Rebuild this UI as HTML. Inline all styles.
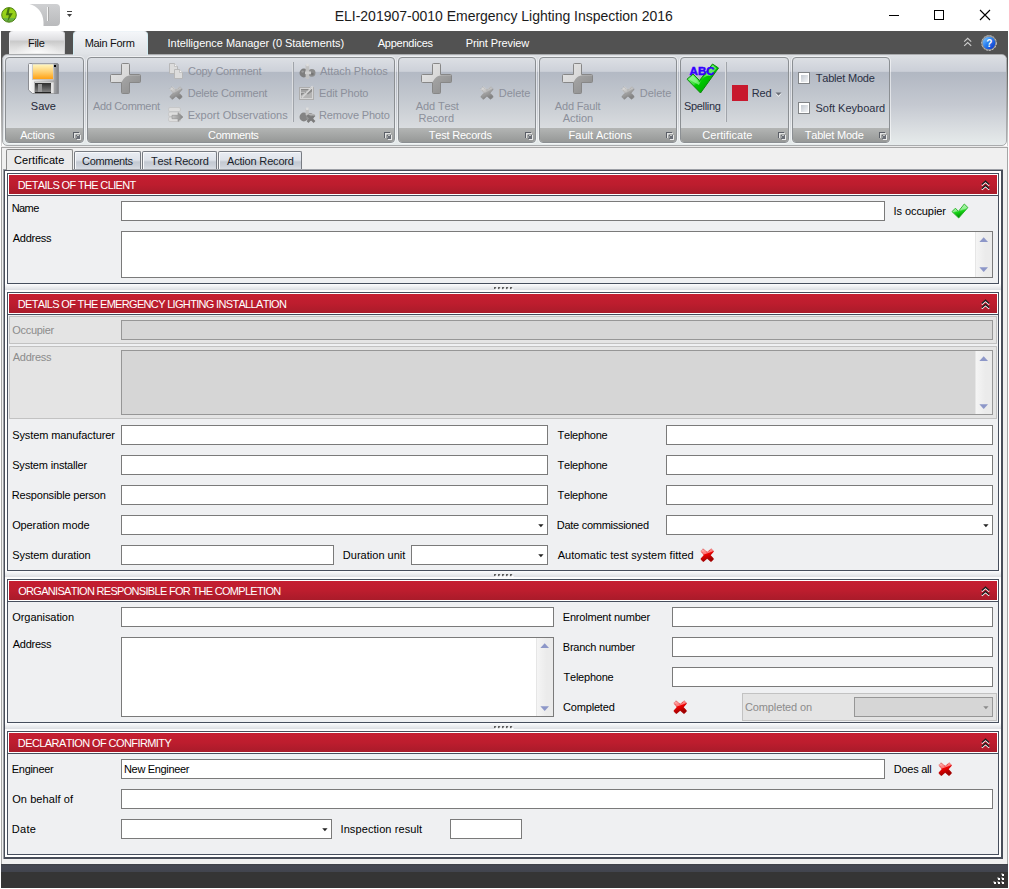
<!DOCTYPE html>
<html><head><meta charset="utf-8"><title>ELI</title>
<style>
*{box-sizing:border-box;margin:0;padding:0}
html,body{width:1009px;height:889px;overflow:hidden;background:#fff;font-family:"Liberation Sans",sans-serif;font-size:11px;color:#000}
body{position:relative}
.t{position:absolute;white-space:nowrap;font-kerning:none}
svg{position:absolute;overflow:visible}
.inp{position:absolute;background:#fff;border:1px solid #7a7a7a}
.dinp{position:absolute;background:#d6d6d6;border:1px solid #969696}
.grp{position:absolute;top:57px;height:86px;border:1px solid #8b8f93;border-radius:4px;background:linear-gradient(#dcdfe4 0,#cdd1d9 13.4px,#b3b9c4 14px,#c3c8cf 40px,#d9dcdf 70px);box-shadow:0 0 0 1px rgba(255,255,255,.55)}
.grp i{position:absolute;left:0;right:0;bottom:0;height:14px;background:linear-gradient(#b3b5b4,#969897);border-radius:0 0 3px 3px}
.hdr{position:absolute;height:19px;background:linear-gradient(#c51e31,#bd1d2e 50%,#a91b2a)}

</style></head><body>
<div style="position:absolute;left:0px;top:0px;width:1009px;height:889px;background:#fff"></div>
<div class="t " style="left:334.7px;top:7.65px;font-size:14px;line-height:17px;letter-spacing:-0.008px;color:#1b1b1b;">ELI-201907-0010 Emergency Lighting Inspection 2016</div>
<svg style="left:880px;top:0" width="129" height="31" viewBox="0 0 129 31"><g stroke="#000" stroke-width="1" fill="none" shape-rendering="crispEdges"><path d="M9 15.5H19"/><rect x="54.5" y="10.5" width="9" height="9"/></g><path d="M100 10L110 20M110 10L100 20" stroke="#000" stroke-width="1.1" fill="none"/></svg>
<svg style="left:1px;top:7px" width="16" height="16" viewBox="0 0 16 16"><defs><linearGradient id="ag" x1="0" y1="0" x2="0" y2="1"><stop offset="0" stop-color="#8cc814"/><stop offset=".3" stop-color="#9ad418"/><stop offset=".68" stop-color="#92cc18"/><stop offset=".7" stop-color="#6eb844"/><stop offset="1" stop-color="#5ea83a"/></linearGradient></defs><circle cx="8" cy="7.9" r="7.3" fill="url(#ag)" stroke="#4f8214" stroke-width="1"/><path d="M6.6 1.5L8.8 .8L7.8 6.2H11.8L6.3 15L7.9 8.2H4.9Z" fill="#44740e"/></svg>
<svg style="left:29px;top:4px" width="32" height="23" viewBox="0 0 32 23"><defs><linearGradient id="qg" x1="0" y1="0" x2="0" y2="1"><stop offset="0" stop-color="#cfd0d2"/><stop offset="1" stop-color="#b9babc"/></linearGradient></defs><path d="M0.5 0H27Q31 0 31 4V18Q31 22 27 22H14.5V18C14 8 8 2 0.5 0Z" fill="url(#qg)"/><path d="M18.5 3V17" stroke="#f4f4f4" stroke-width="1"/><path d="M19.5 3V17" stroke="#aaa" stroke-width="1"/></svg>
<svg style="left:66px;top:10px" width="8" height="8" viewBox="0 0 8 8"><path d="M1 1.5H6" stroke="#444" stroke-width="1"/><path d="M1 4H6L3.5 7Z" fill="#444"/></svg>
<div style="position:absolute;left:1px;top:31px;width:1007px;height:27px;background:#525252"></div>
<div style="position:absolute;left:1px;top:58px;width:1px;height:89px;background:linear-gradient(#525252,#d4d4d4)"></div>
<div style="position:absolute;left:1007px;top:58px;width:1px;height:89px;background:linear-gradient(#525252,#d4d4d4)"></div>
<div style="position:absolute;left:9px;top:31px;width:56px;height:23px;border-radius:4px 4px 0 0;background:linear-gradient(#f6f6f8 0,#dedee1 9px,#c9c9c9 10px,#dcdcdc 16px,#ededed 23px);box-shadow:inset 1px 0 0 #e8e8ea, inset -1px 0 0 #d0d0d2"></div>
<div style="position:absolute;left:14px;top:41px;width:46px;height:12px;background:radial-gradient(ellipse at 50% 100%,rgba(255,255,255,.85),rgba(255,255,255,0) 70%)"></div>
<div class="t " style="left:28.0px;top:36.19px;font-size:11px;line-height:14px;letter-spacing:-0.311px;color:#111;">File</div>
<div class="t " style="left:167.5px;top:36.19px;font-size:11px;line-height:14px;letter-spacing:-0.021px;color:#fff;">Intelligence Manager (0 Statements)</div>
<div class="t " style="left:377.7px;top:36.19px;font-size:11px;line-height:14px;letter-spacing:-0.230px;color:#fff;">Appendices</div>
<div class="t " style="left:465.7px;top:36.19px;font-size:11px;line-height:14px;letter-spacing:-0.102px;color:#fff;">Print Preview</div>
<svg style="left:963px;top:37px" width="10" height="11" viewBox="0 0 10 11"><path d="M1.2 4.6L4.7 1.3L8.2 4.6M1.2 8.9L4.7 5.6L8.2 8.9" stroke="#cdcdcd" stroke-width="1.15" fill="none"/></svg>
<svg style="left:981px;top:35px" width="16" height="16" viewBox="0 0 16 16"><defs><linearGradient id="hg" x1="0" y1="0" x2="1" y2="1"><stop offset="0" stop-color="#8fd0ff"/><stop offset=".45" stop-color="#2a80f0"/><stop offset="1" stop-color="#0a2cc0"/></linearGradient></defs><circle cx="8" cy="8" r="7.4" fill="#8c8c8c" stroke="#c4c4c4" stroke-width="1" stroke-dasharray="2.2 1"/><circle cx="8" cy="8" r="6.3" fill="url(#hg)"/><text x="8.2" y="11.6" font-family="Liberation Sans" font-weight="bold" font-size="10" fill="#fff" text-anchor="middle">?</text></svg>
<div style="position:absolute;left:2px;top:54px;width:1005px;height:92px;border:1px solid #a9abad;border-radius:5px;background:linear-gradient(#dcdfe3 0,#cbcfd8 16.4px,#b1b7c2 17px,#c5c9d1 50px,#dfe3e5 80px,#e7eded 92px)"></div>
<div style="position:absolute;left:73px;top:31px;width:75px;height:24px;border-radius:4px 4px 0 0;background:linear-gradient(#f4f6f9,#e6e9ed 60%,#dfe2e6);border:1px solid #d4eef4;border-top-color:#eef4f8;border-bottom:none"></div>
<div style="position:absolute;left:74px;top:54px;width:73px;height:1px;background:#dee1e5"></div>
<div class="t " style="left:84.7px;top:36.19px;font-size:11px;line-height:14px;letter-spacing:-0.304px;color:#111;">Main Form</div>
<div class="grp" style="left:5px;width:79px"><i></i></div>
<div class="grp" style="left:87px;width:308px"><i></i></div>
<div class="grp" style="left:398px;width:138px"><i></i></div>
<div class="grp" style="left:539px;width:138px"><i></i></div>
<div class="grp" style="left:680px;width:109px"><i></i></div>
<div class="grp" style="left:792px;width:98px"><i></i></div>
<svg style="left:73px;top:132px" width="8" height="8" viewBox="0 0 8 8" shape-rendering="crispEdges"><path d="M0 0H6V1H1V6H0Z" fill="#5a5e66"/><path d="M1 1H7V2H2V6H1Z" fill="#e2e3e3"/><path d="M7 3H8V8H4V7H7Z" fill="#e8e9e9"/><rect x="3" y="3" width="4" height="4" fill="#6a6e76"/><rect x="4" y="3" width="2" height="1" fill="#c4c6c6"/><rect x="3" y="4" width="1" height="2" fill="#9a9da0"/><rect x="2" y="2" width="1" height="1" fill="#c8caca"/></svg>
<svg style="left:384px;top:132px" width="8" height="8" viewBox="0 0 8 8" shape-rendering="crispEdges"><path d="M0 0H6V1H1V6H0Z" fill="#5a5e66"/><path d="M1 1H7V2H2V6H1Z" fill="#e2e3e3"/><path d="M7 3H8V8H4V7H7Z" fill="#e8e9e9"/><rect x="3" y="3" width="4" height="4" fill="#6a6e76"/><rect x="4" y="3" width="2" height="1" fill="#c4c6c6"/><rect x="3" y="4" width="1" height="2" fill="#9a9da0"/><rect x="2" y="2" width="1" height="1" fill="#c8caca"/></svg>
<svg style="left:525px;top:132px" width="8" height="8" viewBox="0 0 8 8" shape-rendering="crispEdges"><path d="M0 0H6V1H1V6H0Z" fill="#5a5e66"/><path d="M1 1H7V2H2V6H1Z" fill="#e2e3e3"/><path d="M7 3H8V8H4V7H7Z" fill="#e8e9e9"/><rect x="3" y="3" width="4" height="4" fill="#6a6e76"/><rect x="4" y="3" width="2" height="1" fill="#c4c6c6"/><rect x="3" y="4" width="1" height="2" fill="#9a9da0"/><rect x="2" y="2" width="1" height="1" fill="#c8caca"/></svg>
<svg style="left:666px;top:132px" width="8" height="8" viewBox="0 0 8 8" shape-rendering="crispEdges"><path d="M0 0H6V1H1V6H0Z" fill="#5a5e66"/><path d="M1 1H7V2H2V6H1Z" fill="#e2e3e3"/><path d="M7 3H8V8H4V7H7Z" fill="#e8e9e9"/><rect x="3" y="3" width="4" height="4" fill="#6a6e76"/><rect x="4" y="3" width="2" height="1" fill="#c4c6c6"/><rect x="3" y="4" width="1" height="2" fill="#9a9da0"/><rect x="2" y="2" width="1" height="1" fill="#c8caca"/></svg>
<svg style="left:778px;top:132px" width="8" height="8" viewBox="0 0 8 8" shape-rendering="crispEdges"><path d="M0 0H6V1H1V6H0Z" fill="#5a5e66"/><path d="M1 1H7V2H2V6H1Z" fill="#e2e3e3"/><path d="M7 3H8V8H4V7H7Z" fill="#e8e9e9"/><rect x="3" y="3" width="4" height="4" fill="#6a6e76"/><rect x="4" y="3" width="2" height="1" fill="#c4c6c6"/><rect x="3" y="4" width="1" height="2" fill="#9a9da0"/><rect x="2" y="2" width="1" height="1" fill="#c8caca"/></svg>
<svg style="left:879px;top:132px" width="8" height="8" viewBox="0 0 8 8" shape-rendering="crispEdges"><path d="M0 0H6V1H1V6H0Z" fill="#5a5e66"/><path d="M1 1H7V2H2V6H1Z" fill="#e2e3e3"/><path d="M7 3H8V8H4V7H7Z" fill="#e8e9e9"/><rect x="3" y="3" width="4" height="4" fill="#6a6e76"/><rect x="4" y="3" width="2" height="1" fill="#c4c6c6"/><rect x="3" y="4" width="1" height="2" fill="#9a9da0"/><rect x="2" y="2" width="1" height="1" fill="#c8caca"/></svg>
<div class="t " style="left:20.3px;top:127.99px;font-size:11px;line-height:14px;letter-spacing:-0.276px;color:#fff;">Actions</div>
<div class="t " style="left:208.1px;top:127.99px;font-size:11px;line-height:14px;letter-spacing:-0.346px;color:#fff;">Comments</div>
<div class="t " style="left:428.8px;top:127.99px;font-size:11px;line-height:14px;letter-spacing:-0.206px;color:#fff;">Test Records</div>
<div class="t " style="left:568.6px;top:127.99px;font-size:11px;line-height:14px;letter-spacing:-0.024px;color:#fff;">Fault Actions</div>
<div class="t " style="left:702.2px;top:127.99px;font-size:11px;line-height:14px;letter-spacing:0.073px;color:#fff;">Certificate</div>
<div class="t " style="left:804.8px;top:127.99px;font-size:11px;line-height:14px;letter-spacing:-0.211px;color:#fff;">Tablet Mode</div>
<svg style="left:28px;top:63px" width="32" height="31" viewBox="0 0 32 31"><defs>
<linearGradient id="sb" x1="0" y1="0" x2="1" y2="0"><stop offset="0" stop-color="#fdfdfd"/><stop offset=".25" stop-color="#e6e6e6"/><stop offset=".8" stop-color="#b4b5b8"/><stop offset="1" stop-color="#7d7f84"/></linearGradient>
<linearGradient id="sl" x1="0" y1="0" x2="0" y2="1"><stop offset="0" stop-color="#fff8c4"/><stop offset=".5" stop-color="#ffd070"/><stop offset="1" stop-color="#ff9e0e"/></linearGradient>
<linearGradient id="sd" x1="0" y1="0" x2="0" y2="1"><stop offset="0" stop-color="#2e2e2e"/><stop offset="1" stop-color="#8a8a8a"/></linearGradient></defs>
<path d="M1.5 .5H29Q30.5 .5 30.5 2V30.5H4.5L.5 27V1.5Q.5 .5 1.5 .5Z" fill="url(#sb)" stroke="#8b8d92" stroke-width="1"/>
<rect x="4.5" y="1" width="21" height="15.5" fill="url(#sl)" stroke="#c0c4cc" stroke-width=".8"/>
<rect x="26" y="2" width="2" height="2" fill="#000"/>
<rect x="6.5" y="19" width="19.5" height="11.5" fill="#e4e4e4" stroke="#9a9a9a" stroke-width=".6"/>
<rect x="7" y="20" width="16" height="10" fill="url(#sd)"/>
<rect x="7" y="29" width="16" height="1.2" fill="#222"/>
<rect x="10" y="21" width="4" height="8" fill="#9a9a9a"/>
</svg>
<div class="t " style="left:30.8px;top:98.69px;font-size:11px;line-height:14px;letter-spacing:0.039px;color:#222636;">Save</div>
<svg style="left:110px;top:63px" width="32" height="32" viewBox="0 0 32 32"><defs>
<linearGradient id="pl110" x1="0" y1="0" x2="1" y2="1"><stop offset="0" stop-color="#e6e6e6"/><stop offset="1" stop-color="#c8c8c8"/></linearGradient>
<linearGradient id="pd110" x1="0" y1="0" x2="1" y2="1"><stop offset="0" stop-color="#a6a6a6"/><stop offset="1" stop-color="#8a8a8a"/></linearGradient>
<clipPath id="pc110"><path d="M12.5 .5H18.5Q19.5 .5 19.5 1.5V11.5H29.5Q30.5 11.5 30.5 12.5V18.5Q30.5 19.5 29.5 19.5H19.5V29.5Q19.5 30.5 18.5 30.5H12.5Q11.5 30.5 11.5 29.5V19.5H1.5Q.5 19.5 .5 18.5V12.5Q.5 11.5 1.5 11.5H11.5V1.5Q11.5 .5 12.5 .5Z"/></clipPath></defs>
<g clip-path="url(#pc110)"><rect width="32" height="32" fill="url(#pl110)"/><path d="M32 12.3H20C15 13 13 16.5 11.5 19.5V32H32Z" fill="url(#pd110)"/></g>
<path d="M12.5 .5H18.5Q19.5 .5 19.5 1.5V11.5H29.5Q30.5 11.5 30.5 12.5V18.5Q30.5 19.5 29.5 19.5H19.5V29.5Q19.5 30.5 18.5 30.5H12.5Q11.5 30.5 11.5 29.5V19.5H1.5Q.5 19.5 .5 18.5V12.5Q.5 11.5 1.5 11.5H11.5V1.5Q11.5 .5 12.5 .5Z" fill="none" stroke="#878787" stroke-width="1"/></svg>
<svg style="left:421px;top:63px" width="32" height="32" viewBox="0 0 32 32"><defs>
<linearGradient id="pl421" x1="0" y1="0" x2="1" y2="1"><stop offset="0" stop-color="#e6e6e6"/><stop offset="1" stop-color="#c8c8c8"/></linearGradient>
<linearGradient id="pd421" x1="0" y1="0" x2="1" y2="1"><stop offset="0" stop-color="#a6a6a6"/><stop offset="1" stop-color="#8a8a8a"/></linearGradient>
<clipPath id="pc421"><path d="M12.5 .5H18.5Q19.5 .5 19.5 1.5V11.5H29.5Q30.5 11.5 30.5 12.5V18.5Q30.5 19.5 29.5 19.5H19.5V29.5Q19.5 30.5 18.5 30.5H12.5Q11.5 30.5 11.5 29.5V19.5H1.5Q.5 19.5 .5 18.5V12.5Q.5 11.5 1.5 11.5H11.5V1.5Q11.5 .5 12.5 .5Z"/></clipPath></defs>
<g clip-path="url(#pc421)"><rect width="32" height="32" fill="url(#pl421)"/><path d="M32 12.3H20C15 13 13 16.5 11.5 19.5V32H32Z" fill="url(#pd421)"/></g>
<path d="M12.5 .5H18.5Q19.5 .5 19.5 1.5V11.5H29.5Q30.5 11.5 30.5 12.5V18.5Q30.5 19.5 29.5 19.5H19.5V29.5Q19.5 30.5 18.5 30.5H12.5Q11.5 30.5 11.5 29.5V19.5H1.5Q.5 19.5 .5 18.5V12.5Q.5 11.5 1.5 11.5H11.5V1.5Q11.5 .5 12.5 .5Z" fill="none" stroke="#878787" stroke-width="1"/></svg>
<svg style="left:562px;top:63px" width="32" height="32" viewBox="0 0 32 32"><defs>
<linearGradient id="pl562" x1="0" y1="0" x2="1" y2="1"><stop offset="0" stop-color="#e6e6e6"/><stop offset="1" stop-color="#c8c8c8"/></linearGradient>
<linearGradient id="pd562" x1="0" y1="0" x2="1" y2="1"><stop offset="0" stop-color="#a6a6a6"/><stop offset="1" stop-color="#8a8a8a"/></linearGradient>
<clipPath id="pc562"><path d="M12.5 .5H18.5Q19.5 .5 19.5 1.5V11.5H29.5Q30.5 11.5 30.5 12.5V18.5Q30.5 19.5 29.5 19.5H19.5V29.5Q19.5 30.5 18.5 30.5H12.5Q11.5 30.5 11.5 29.5V19.5H1.5Q.5 19.5 .5 18.5V12.5Q.5 11.5 1.5 11.5H11.5V1.5Q11.5 .5 12.5 .5Z"/></clipPath></defs>
<g clip-path="url(#pc562)"><rect width="32" height="32" fill="url(#pl562)"/><path d="M32 12.3H20C15 13 13 16.5 11.5 19.5V32H32Z" fill="url(#pd562)"/></g>
<path d="M12.5 .5H18.5Q19.5 .5 19.5 1.5V11.5H29.5Q30.5 11.5 30.5 12.5V18.5Q30.5 19.5 29.5 19.5H19.5V29.5Q19.5 30.5 18.5 30.5H12.5Q11.5 30.5 11.5 29.5V19.5H1.5Q.5 19.5 .5 18.5V12.5Q.5 11.5 1.5 11.5H11.5V1.5Q11.5 .5 12.5 .5Z" fill="none" stroke="#878787" stroke-width="1"/></svg>
<div class="t " style="left:92.9px;top:98.69px;font-size:11px;line-height:14px;letter-spacing:-0.321px;color:#8c909b;">Add Comment</div>
<div class="t " style="left:415.8px;top:98.69px;font-size:11px;line-height:14px;letter-spacing:-0.131px;color:#8c909b;">Add Test</div>
<div class="t " style="left:418.4px;top:111.49px;font-size:11px;line-height:14px;letter-spacing:0.050px;color:#8c909b;">Record</div>
<div class="t " style="left:554.8px;top:98.69px;font-size:11px;line-height:14px;letter-spacing:-0.173px;color:#8c909b;">Add Fault</div>
<div class="t " style="left:562.7px;top:111.49px;font-size:11px;line-height:14px;letter-spacing:-0.027px;color:#8c909b;">Action</div>
<svg style="left:169px;top:86px" width="14" height="14" viewBox="0 0 15 15"><defs><linearGradient id="gx16986" x1="0" y1="0" x2=".5" y2="1"><stop offset="0" stop-color="#dedede"/><stop offset=".45" stop-color="#bebebe"/><stop offset=".55" stop-color="#a2a2a2"/><stop offset="1" stop-color="#848484"/></linearGradient></defs><path d="M3.6 1.6L7.5 5L11.4 1.6L13.4 3.6L10 7.5L13.4 11.4L11.4 13.4L7.5 10L3.6 13.4L1.6 11.4L5 7.5L1.6 3.6Z" fill="url(#gx16986)" stroke="url(#gx16986)" stroke-width="1.8" stroke-linejoin="round"/><path d="M3.6 1.6L7.5 5L11.4 1.6L13.4 3.6L10 7.5L13.4 11.4L11.4 13.4L7.5 10L3.6 13.4L1.6 11.4L5 7.5L1.6 3.6Z" fill="none" stroke="#868686" stroke-width=".5" stroke-linejoin="round" stroke-dasharray="1 .9" transform="translate(7.5 7.5) scale(1.13) translate(-7.5 -7.5)"/></svg>
<svg style="left:479.7px;top:85.6px" width="14" height="14" viewBox="0 0 15 15"><defs><linearGradient id="gx479_785_6" x1="0" y1="0" x2=".5" y2="1"><stop offset="0" stop-color="#dedede"/><stop offset=".45" stop-color="#bebebe"/><stop offset=".55" stop-color="#a2a2a2"/><stop offset="1" stop-color="#848484"/></linearGradient></defs><path d="M3.6 1.6L7.5 5L11.4 1.6L13.4 3.6L10 7.5L13.4 11.4L11.4 13.4L7.5 10L3.6 13.4L1.6 11.4L5 7.5L1.6 3.6Z" fill="url(#gx479_785_6)" stroke="url(#gx479_785_6)" stroke-width="1.8" stroke-linejoin="round"/><path d="M3.6 1.6L7.5 5L11.4 1.6L13.4 3.6L10 7.5L13.4 11.4L11.4 13.4L7.5 10L3.6 13.4L1.6 11.4L5 7.5L1.6 3.6Z" fill="none" stroke="#868686" stroke-width=".5" stroke-linejoin="round" stroke-dasharray="1 .9" transform="translate(7.5 7.5) scale(1.13) translate(-7.5 -7.5)"/></svg>
<svg style="left:620.8px;top:85.6px" width="14" height="14" viewBox="0 0 15 15"><defs><linearGradient id="gx620_885_6" x1="0" y1="0" x2=".5" y2="1"><stop offset="0" stop-color="#dedede"/><stop offset=".45" stop-color="#bebebe"/><stop offset=".55" stop-color="#a2a2a2"/><stop offset="1" stop-color="#848484"/></linearGradient></defs><path d="M3.6 1.6L7.5 5L11.4 1.6L13.4 3.6L10 7.5L13.4 11.4L11.4 13.4L7.5 10L3.6 13.4L1.6 11.4L5 7.5L1.6 3.6Z" fill="url(#gx620_885_6)" stroke="url(#gx620_885_6)" stroke-width="1.8" stroke-linejoin="round"/><path d="M3.6 1.6L7.5 5L11.4 1.6L13.4 3.6L10 7.5L13.4 11.4L11.4 13.4L7.5 10L3.6 13.4L1.6 11.4L5 7.5L1.6 3.6Z" fill="none" stroke="#868686" stroke-width=".5" stroke-linejoin="round" stroke-dasharray="1 .9" transform="translate(7.5 7.5) scale(1.13) translate(-7.5 -7.5)"/></svg>
<div class="t " style="left:498.7px;top:85.89px;font-size:11px;line-height:14px;letter-spacing:-0.001px;color:#8c909b;">Delete</div>
<div class="t " style="left:639.7px;top:85.89px;font-size:11px;line-height:14px;letter-spacing:-0.001px;color:#8c909b;">Delete</div>
<svg style="left:169px;top:63px" width="14" height="16" viewBox="0 0 14 16"><g fill="#dcdcdc" stroke="#b4b4b4" stroke-width=".9"><path d="M.5 .5H5.5L8.5 3.5V10.5H.5Z"/><path d="M5.5 6.5H10.5L13.5 9.5V15.5H5.5Z"/></g><path d="M5.5 .5V3.5H8.5M10.5 6.5V9.5H13.5" fill="#f4f4f4" stroke="#b4b4b4" stroke-width=".7"/></svg>
<svg style="left:168px;top:107px" width="16" height="15" viewBox="0 0 16 15"><g fill="#dedede" stroke="#c2c2c2" stroke-width=".7"><rect x=".5" y=".5" width="12" height="4" rx="1.5"/><rect x=".5" y="5" width="12" height="4.5" rx="1.5"/><rect x=".5" y="10" width="12" height="4.5" rx="1.5"/></g><defs><linearGradient id="eg" x1="0" y1="0" x2="1" y2="0"><stop offset="0" stop-color="#c4c4c4"/><stop offset="1" stop-color="#868686"/></linearGradient></defs><path d="M4 8.3H10V5.6L15 10L10 14.4V11.7H4Z" fill="url(#eg)" stroke="#8e8e8e" stroke-width=".6"/></svg>
<div class="t " style="left:188.0px;top:63.89px;font-size:11px;line-height:14px;letter-spacing:-0.270px;color:#8c909b;">Copy Comment</div>
<div class="t " style="left:187.7px;top:85.89px;font-size:11px;line-height:14px;letter-spacing:-0.219px;color:#8c909b;">Delete Comment</div>
<div class="t " style="left:187.7px;top:107.89px;font-size:11px;line-height:14px;letter-spacing:0.019px;color:#8c909b;">Export Observations</div>
<div style="position:absolute;left:292px;top:62px;width:1px;height:60px;background:#dcdee1"></div>
<div style="position:absolute;left:293px;top:62px;width:1px;height:60px;background:#a0a4aa"></div>
<svg style="left:298.5px;top:62.5px" width="17" height="17" viewBox="0 0 17 17"><defs><filter id="bl"><feGaussianBlur stdDeviation=".45"/></filter></defs><g filter="url(#bl)"><ellipse cx="4.8" cy="10" rx="4.3" ry="4.4" fill="#7e7e7e"/><ellipse cx="12.8" cy="9.8" rx="3.7" ry="3.9" fill="#8c8c8c"/><rect x="6.6" y="1.5" width="3.6" height="14.5" rx="1" fill="#c2c2c2"/><rect x="7.2" y=".6" width="2.6" height="2.6" fill="#dedede"/><rect x="6" y="8.5" width="6" height="2.6" fill="#cfcfcf"/><circle cx="3.6" cy="8.6" r="1.2" fill="#9c9c9c"/><circle cx="13.4" cy="11" r="1.3" fill="#747474"/></g></svg>
<svg style="left:299px;top:85px" width="16" height="16" viewBox="0 0 16 16"><rect x=".5" y="2.5" width="14" height="12" fill="#d4d4d4" stroke="#adadad"/><rect x="2" y="4" width="11" height="9" fill="#8a8a8a"/><path d="M2 10.5L5.5 8L9 9.5L13 6.5V13H2Z" fill="#b4b4b4"/><path d="M2 6H8M2 7.5H6" stroke="#c8c8c8" stroke-width=".8"/><path d="M3 12.5L13.8 1.4" stroke="#e6e6e6" stroke-width="1.7"/><path d="M3 12.5L13.8 1.4" stroke="#a2a2a2" stroke-width=".5"/></svg>
<svg style="left:298.5px;top:106.5px" width="17" height="17" viewBox="0 0 17 17"><g filter="url(#bl)"><ellipse cx="4.8" cy="10" rx="4.3" ry="4.4" fill="#848484"/><ellipse cx="11" cy="9.8" rx="3.7" ry="3.9" fill="#949494"/><rect x="6.6" y="1.5" width="3.2" height="7" rx="1" fill="#c2c2c2"/><rect x="7.1" y=".6" width="2.4" height="2.4" fill="#dedede"/><path d="M8.5 8L15.5 15M15.5 8L8.5 15" stroke="#7c7c7c" stroke-width="2.5"/><path d="M9.5 7.4L15.6 8" stroke="#b6b6b6" stroke-width="1.4"/></g></svg>
<div class="t " style="left:319.9px;top:63.89px;font-size:11px;line-height:14px;letter-spacing:-0.056px;color:#8c909b;">Attach Photos</div>
<div class="t " style="left:319.0px;top:85.89px;font-size:11px;line-height:14px;letter-spacing:-0.144px;color:#8c909b;">Edit Photo</div>
<div class="t " style="left:319.0px;top:107.89px;font-size:11px;line-height:14px;letter-spacing:-0.182px;color:#8c909b;">Remove Photo</div>
<svg style="left:686px;top:63px" width="34" height="31" viewBox="0 0 34 31"><defs><linearGradient id="ck" x1="0" y1="0" x2="1" y2="1"><stop offset="0" stop-color="#9cff9c"/><stop offset=".45" stop-color="#3de03d"/><stop offset=".5" stop-color="#00cc00"/><stop offset="1" stop-color="#008a00"/></linearGradient></defs>
<path d="M1 16.2L7 11L13.5 17.5L26.5 1L32.5 5L14.5 30Z" fill="url(#ck)" stroke="#0a8a0a" stroke-width="1" stroke-linejoin="round"/>
<path d="M2.6 16.2L7 12.6L13.6 19.4L26.8 2.6L30.6 5.2L24 13C20 11.5 15 16 13 22Z" fill="#b4ffb4" opacity=".55"/>
<text x="3.6" y="12" font-family="Liberation Sans" font-weight="bold" font-size="11.5" fill="#3300ff" stroke="#3300ff" stroke-width=".5" textLength="25">ABC</text></svg>
<div class="t " style="left:684.0px;top:98.69px;font-size:11px;line-height:14px;letter-spacing:-0.333px;color:#2a2f42;">Spelling</div>
<div style="position:absolute;left:725px;top:62px;width:1px;height:60px;background:#dcdee1"></div>
<div style="position:absolute;left:726px;top:62px;width:1px;height:60px;background:#a0a4aa"></div>
<div style="position:absolute;left:732px;top:85px;width:16px;height:16px;background:#c8192e"></div>
<div class="t " style="left:751.8px;top:85.89px;font-size:11px;line-height:14px;letter-spacing:-0.134px;color:#2a3044;">Red</div>
<svg style="left:775px;top:92px" width="7" height="5" viewBox="0 0 7 5"><path d="M.5 1.4H6.5L3.5 4.8Z" fill="#fff"/><path d="M.5 .4H6.5L3.5 3.8Z" fill="#6a6e76"/></svg>
<div style="position:absolute;left:798px;top:72px;width:12px;height:12px;border:1px solid #808386;background:#fff"><div style="position:absolute;left:1.5px;top:1.5px;width:7px;height:7px;background:linear-gradient(135deg,#c3c9d1,#f4f5f7)"></div></div>
<div style="position:absolute;left:798px;top:102px;width:12px;height:12px;border:1px solid #808386;background:#fff"><div style="position:absolute;left:1.5px;top:1.5px;width:7px;height:7px;background:linear-gradient(135deg,#c3c9d1,#f4f5f7)"></div></div>
<div class="t " style="left:815.8px;top:70.89px;font-size:11px;line-height:14px;letter-spacing:-0.211px;color:#2a3044;">Tablet Mode</div>
<div class="t " style="left:815.5px;top:100.89px;font-size:11px;line-height:14px;letter-spacing:-0.000px;color:#2a3044;">Soft Keyboard</div>
<div style="position:absolute;left:1px;top:146px;width:1007px;height:1px;background:#ececec"></div>
<div style="position:absolute;left:1px;top:147px;width:1007px;height:717px;background:#f0f0f0;border:1px solid #a6a6a6;border-bottom:none"></div>
<div style="position:absolute;left:74px;top:151px;width:67px;height:19px;border:1px solid #777b82;border-bottom:none;border-radius:2px 2px 0 0;background:linear-gradient(#e9edf3 0,#dfe3ea 8px,#c3c9d2 10px,#ccd1d9 14px,#e1e4e9 19px);box-shadow:inset 1px 1px 0 #f8f9fb"></div>
<div class="t " style="left:82.1px;top:154.19px;font-size:11px;line-height:14px;letter-spacing:-0.332px;color:#1a1f2c;">Comments</div>
<div style="position:absolute;left:142px;top:151px;width:75px;height:19px;border:1px solid #777b82;border-bottom:none;border-radius:2px 2px 0 0;background:linear-gradient(#e9edf3 0,#dfe3ea 8px,#c3c9d2 10px,#ccd1d9 14px,#e1e4e9 19px);box-shadow:inset 1px 1px 0 #f8f9fb"></div>
<div class="t " style="left:151.0px;top:154.19px;font-size:11px;line-height:14px;letter-spacing:-0.205px;color:#1a1f2c;">Test Record</div>
<div style="position:absolute;left:218px;top:151px;width:84px;height:19px;border:1px solid #777b82;border-bottom:none;border-radius:2px 2px 0 0;background:linear-gradient(#e9edf3 0,#dfe3ea 8px,#c3c9d2 10px,#ccd1d9 14px,#e1e4e9 19px);box-shadow:inset 1px 1px 0 #f8f9fb"></div>
<div class="t " style="left:227.0px;top:154.19px;font-size:11px;line-height:14px;letter-spacing:-0.180px;color:#1a1f2c;">Action Record</div>
<div style="position:absolute;left:3px;top:169px;width:1000px;height:690px;background:#9da0a6"></div>
<div style="position:absolute;left:4px;top:170px;width:999px;height:689px;border:1px solid #484d59;border-right-width:2px;border-bottom-width:2px;background:#fff"></div>
<div style="position:absolute;left:6px;top:149px;width:67px;height:21px;border:1px solid #8a8a8a;border-bottom:none;border-radius:2px 2px 0 0;background:#ebebeb"></div>
<div class="t " style="left:14.1px;top:153.19px;font-size:11px;line-height:14px;letter-spacing:0.073px;color:#000;">Certificate</div>
<div style="position:absolute;left:7px;top:173px;width:992px;height:111px;border:1px solid #464e5d;background:#eff0f2"></div>
<div style="position:absolute;left:8px;top:174px;width:990px;height:21px;background:#fff"></div>
<div class="hdr" style="left:9px;top:175px;width:988px"></div>
<div style="position:absolute;left:8px;top:195px;width:990px;height:1px;background:#464e5d"></div>
<div class="t " style="left:17.8px;top:177.99px;font-size:11px;line-height:14px;letter-spacing:-0.648px;color:#fff;">DETAILS OF THE CLIENT</div>
<svg style="left:981px;top:180px" width="9" height="10" viewBox="0 0 9 10"><path d="M.8 4.6L4.5 1.2L8.2 4.6M.8 8.8L4.5 5.4L8.2 8.8" stroke="#fff" stroke-width="1.6" fill="none" transform="translate(0,.9)"/><path d="M.8 4.6L4.5 1.2L8.2 4.6M.8 8.8L4.5 5.4L8.2 8.8" stroke="#1a1a1a" stroke-width="1.3" fill="none"/></svg>
<div style="position:absolute;left:5px;top:284px;width:996px;height:8px;background:linear-gradient(#fdfdfe 0,#f2f3f5 2px,#dfe1e5 5.5px,#fbfbfc 6.5px,#fff 8px)"></div>
<svg style="left:494px;top:287px" width="20" height="4" viewBox="0 0 20 4"><path d="M1 1H3V2L2 3H1Z" fill="#fff" transform="translate(.6,.8)"/><path d="M0 0H2.4L1.2 2H0Z" fill="#5e5e5e"/><path d="M5 1H7V2L6 3H5Z" fill="#fff" transform="translate(.6,.8)"/><path d="M4 0H6.4L5.2 2H4Z" fill="#5e5e5e"/><path d="M9 1H11V2L10 3H9Z" fill="#fff" transform="translate(.6,.8)"/><path d="M8 0H10.4L9.2 2H8Z" fill="#5e5e5e"/><path d="M13 1H15V2L14 3H13Z" fill="#fff" transform="translate(.6,.8)"/><path d="M12 0H14.4L13.2 2H12Z" fill="#5e5e5e"/><path d="M17 1H19V2L18 3H17Z" fill="#fff" transform="translate(.6,.8)"/><path d="M16 0H18.4L17.2 2H16Z" fill="#5e5e5e"/></svg>
<div style="position:absolute;left:7px;top:292px;width:992px;height:279px;border:1px solid #464e5d;background:#eff0f2"></div>
<div style="position:absolute;left:8px;top:293px;width:990px;height:21px;background:#fff"></div>
<div class="hdr" style="left:9px;top:294px;width:988px"></div>
<div style="position:absolute;left:8px;top:314px;width:990px;height:1px;background:#464e5d"></div>
<div class="t " style="left:17.8px;top:296.99px;font-size:11px;line-height:14px;letter-spacing:-0.675px;color:#fff;">DETAILS OF THE EMERGENCY LIGHTING INSTALLATION</div>
<svg style="left:981px;top:299px" width="9" height="10" viewBox="0 0 9 10"><path d="M.8 4.6L4.5 1.2L8.2 4.6M.8 8.8L4.5 5.4L8.2 8.8" stroke="#fff" stroke-width="1.6" fill="none" transform="translate(0,.9)"/><path d="M.8 4.6L4.5 1.2L8.2 4.6M.8 8.8L4.5 5.4L8.2 8.8" stroke="#1a1a1a" stroke-width="1.3" fill="none"/></svg>
<div style="position:absolute;left:5px;top:571px;width:996px;height:8px;background:linear-gradient(#fdfdfe 0,#f2f3f5 2px,#dfe1e5 5.5px,#fbfbfc 6.5px,#fff 8px)"></div>
<svg style="left:494px;top:574px" width="20" height="4" viewBox="0 0 20 4"><path d="M1 1H3V2L2 3H1Z" fill="#fff" transform="translate(.6,.8)"/><path d="M0 0H2.4L1.2 2H0Z" fill="#5e5e5e"/><path d="M5 1H7V2L6 3H5Z" fill="#fff" transform="translate(.6,.8)"/><path d="M4 0H6.4L5.2 2H4Z" fill="#5e5e5e"/><path d="M9 1H11V2L10 3H9Z" fill="#fff" transform="translate(.6,.8)"/><path d="M8 0H10.4L9.2 2H8Z" fill="#5e5e5e"/><path d="M13 1H15V2L14 3H13Z" fill="#fff" transform="translate(.6,.8)"/><path d="M12 0H14.4L13.2 2H12Z" fill="#5e5e5e"/><path d="M17 1H19V2L18 3H17Z" fill="#fff" transform="translate(.6,.8)"/><path d="M16 0H18.4L17.2 2H16Z" fill="#5e5e5e"/></svg>
<div style="position:absolute;left:7px;top:579px;width:992px;height:144px;border:1px solid #464e5d;background:#eff0f2"></div>
<div style="position:absolute;left:8px;top:580px;width:990px;height:21px;background:#fff"></div>
<div class="hdr" style="left:9px;top:581px;width:988px"></div>
<div style="position:absolute;left:8px;top:601px;width:990px;height:1px;background:#464e5d"></div>
<div class="t " style="left:18.2px;top:583.99px;font-size:11px;line-height:14px;letter-spacing:-0.694px;color:#fff;">ORGANISATION RESPONSIBLE FOR THE COMPLETION</div>
<svg style="left:981px;top:586px" width="9" height="10" viewBox="0 0 9 10"><path d="M.8 4.6L4.5 1.2L8.2 4.6M.8 8.8L4.5 5.4L8.2 8.8" stroke="#fff" stroke-width="1.6" fill="none" transform="translate(0,.9)"/><path d="M.8 4.6L4.5 1.2L8.2 4.6M.8 8.8L4.5 5.4L8.2 8.8" stroke="#1a1a1a" stroke-width="1.3" fill="none"/></svg>
<div style="position:absolute;left:5px;top:723px;width:996px;height:8px;background:linear-gradient(#fdfdfe 0,#f2f3f5 2px,#dfe1e5 5.5px,#fbfbfc 6.5px,#fff 8px)"></div>
<svg style="left:494px;top:726px" width="20" height="4" viewBox="0 0 20 4"><path d="M1 1H3V2L2 3H1Z" fill="#fff" transform="translate(.6,.8)"/><path d="M0 0H2.4L1.2 2H0Z" fill="#5e5e5e"/><path d="M5 1H7V2L6 3H5Z" fill="#fff" transform="translate(.6,.8)"/><path d="M4 0H6.4L5.2 2H4Z" fill="#5e5e5e"/><path d="M9 1H11V2L10 3H9Z" fill="#fff" transform="translate(.6,.8)"/><path d="M8 0H10.4L9.2 2H8Z" fill="#5e5e5e"/><path d="M13 1H15V2L14 3H13Z" fill="#fff" transform="translate(.6,.8)"/><path d="M12 0H14.4L13.2 2H12Z" fill="#5e5e5e"/><path d="M17 1H19V2L18 3H17Z" fill="#fff" transform="translate(.6,.8)"/><path d="M16 0H18.4L17.2 2H16Z" fill="#5e5e5e"/></svg>
<div style="position:absolute;left:7px;top:731px;width:992px;height:124px;border:1px solid #464e5d;background:#eff0f2"></div>
<div style="position:absolute;left:8px;top:732px;width:990px;height:21px;background:#fff"></div>
<div class="hdr" style="left:9px;top:733px;width:988px"></div>
<div style="position:absolute;left:8px;top:753px;width:990px;height:1px;background:#464e5d"></div>
<div class="t " style="left:17.8px;top:735.99px;font-size:11px;line-height:14px;letter-spacing:-0.588px;color:#fff;">DECLARATION OF CONFIRMITY</div>
<svg style="left:981px;top:738px" width="9" height="10" viewBox="0 0 9 10"><path d="M.8 4.6L4.5 1.2L8.2 4.6M.8 8.8L4.5 5.4L8.2 8.8" stroke="#fff" stroke-width="1.6" fill="none" transform="translate(0,.9)"/><path d="M.8 4.6L4.5 1.2L8.2 4.6M.8 8.8L4.5 5.4L8.2 8.8" stroke="#1a1a1a" stroke-width="1.3" fill="none"/></svg>
<div class="t " style="left:11.8px;top:200.89px;font-size:11px;line-height:14px;letter-spacing:-0.617px;color:#000;">Name</div>
<div class="inp" style="left:121px;top:201px;width:764px;height:20px"></div>
<div class="t " style="left:893.5px;top:204.09px;font-size:11px;line-height:14px;letter-spacing:-0.069px;color:#000;">Is occupier</div>
<svg style="left:951px;top:203px" width="18" height="16" viewBox="0 0 18 16"><defs><linearGradient id="c2" x1="0" y1="0" x2=".3" y2="1"><stop offset="0" stop-color="#c4fac4"/><stop offset=".52" stop-color="#90ee90"/><stop offset=".62" stop-color="#18d818"/><stop offset="1" stop-color="#008a00"/></linearGradient></defs><path d="M1 8.6L4.4 5.2L7.4 8.4L13.3 1L16.9 4.5L7.7 15Z" fill="url(#c2)" stroke="#22b022" stroke-width=".9" stroke-linejoin="round"/></svg>
<div class="t " style="left:12.7px;top:230.69px;font-size:11px;line-height:14px;letter-spacing:-0.239px;color:#000;">Address</div>
<div class="inp" style="left:121px;top:231px;width:872px;height:47px"></div>
<div style="position:absolute;left:975px;top:232px;width:17px;height:45px;background:linear-gradient(90deg,#f5f5f5,#ebebeb 60%);border-left:1px solid #e6e6e6"></div>
<svg style="left:979px;top:237px" width="9.4" height="5.2" viewBox="0 0 10 6"><path d="M0 5.8L5 .3L10 5.8Z" fill="#8d97c8"/></svg>
<svg style="left:979px;top:266.6px" width="9.4" height="5.2" viewBox="0 0 10 6"><path d="M0 .2L5 5.7L10 .2Z" fill="#8d97c8"/></svg>
<div style="position:absolute;left:9px;top:316px;width:988px;height:28px;background:#e4e4e4;border:1px solid #c2c2c2"></div>
<div class="t " style="left:12.2px;top:322.79px;font-size:11px;line-height:14px;letter-spacing:-0.288px;color:#8c8c8c;">Occupier</div>
<div class="dinp" style="left:121px;top:320px;width:872px;height:20px"></div>
<div style="position:absolute;left:9px;top:346px;width:988px;height:73px;background:#e4e4e4;border:1px solid #c2c2c2"></div>
<div class="t " style="left:12.7px;top:349.79px;font-size:11px;line-height:14px;letter-spacing:-0.239px;color:#8c8c8c;">Address</div>
<div class="dinp" style="left:121px;top:350px;width:872px;height:65px"></div>
<div style="position:absolute;left:975px;top:351px;width:17px;height:63px;background:linear-gradient(90deg,#f5f5f5,#ebebeb 60%);border-left:1px solid #e6e6e6"></div>
<svg style="left:979px;top:356px" width="9.4" height="5.2" viewBox="0 0 10 6"><path d="M0 5.8L5 .3L10 5.8Z" fill="#8d97c8"/></svg>
<svg style="left:979px;top:403.6px" width="9.4" height="5.2" viewBox="0 0 10 6"><path d="M0 .2L5 5.7L10 .2Z" fill="#8d97c8"/></svg>
<div class="t " style="left:12.2px;top:427.79px;font-size:11px;line-height:14px;letter-spacing:-0.098px;color:#000;">System manufacturer</div>
<div class="t " style="left:12.2px;top:457.79px;font-size:11px;line-height:14px;letter-spacing:-0.177px;color:#000;">System installer</div>
<div class="t " style="left:11.8px;top:487.79px;font-size:11px;line-height:14px;letter-spacing:-0.183px;color:#000;">Responsible person</div>
<div class="t " style="left:12.2px;top:517.79px;font-size:11px;line-height:14px;letter-spacing:-0.121px;color:#000;">Operation mode</div>
<div class="t " style="left:12.2px;top:547.79px;font-size:11px;line-height:14px;letter-spacing:-0.069px;color:#000;">System duration</div>
<div class="inp" style="left:121px;top:425px;width:427px;height:20px"></div>
<div class="inp" style="left:666px;top:425px;width:327px;height:20px"></div>
<div class="inp" style="left:121px;top:455px;width:427px;height:20px"></div>
<div class="inp" style="left:666px;top:455px;width:327px;height:20px"></div>
<div class="inp" style="left:121px;top:485px;width:427px;height:20px"></div>
<div class="inp" style="left:666px;top:485px;width:327px;height:20px"></div>
<div class="inp" style="left:121px;top:515px;width:427px;height:20px"></div>
<div class="inp" style="left:666px;top:515px;width:327px;height:20px"></div>
<div class="t " style="left:557.5px;top:427.79px;font-size:11px;line-height:14px;letter-spacing:-0.219px;color:#000;">Telephone</div>
<div class="t " style="left:557.5px;top:457.79px;font-size:11px;line-height:14px;letter-spacing:-0.219px;color:#000;">Telephone</div>
<div class="t " style="left:557.5px;top:487.79px;font-size:11px;line-height:14px;letter-spacing:-0.219px;color:#000;">Telephone</div>
<svg style="left:537.6px;top:523.7px" width="5.8" height="3.4" viewBox="0 0 7 4"><path d="M.3 .2H6.7L3.5 3.9Z" fill="#222"/></svg>
<svg style="left:982.6px;top:523.7px" width="5.8" height="3.4" viewBox="0 0 7 4"><path d="M.3 .2H6.7L3.5 3.9Z" fill="#222"/></svg>
<div class="t " style="left:556.8px;top:517.79px;font-size:11px;line-height:14px;letter-spacing:-0.274px;color:#000;">Date commissioned</div>
<div class="inp" style="left:121px;top:545px;width:213px;height:20px"></div>
<div class="t " style="left:342.8px;top:547.79px;font-size:11px;line-height:14px;letter-spacing:0.018px;color:#000;">Duration unit</div>
<div class="inp" style="left:411px;top:545px;width:137px;height:20px"></div>
<svg style="left:537.6px;top:553.7px" width="5.8" height="3.4" viewBox="0 0 7 4"><path d="M.3 .2H6.7L3.5 3.9Z" fill="#222"/></svg>
<div class="t " style="left:557.7px;top:547.79px;font-size:11px;line-height:14px;letter-spacing:0.057px;color:#000;">Automatic test system fitted</div>
<svg style="left:699.5px;top:547.5px" width="14.4" height="14.4" viewBox="0 0 15 15"><defs><linearGradient id="rx699_5547_5" x1="0" y1="0" x2=".35" y2="1"><stop offset="0" stop-color="#ffb4b4"/><stop offset=".42" stop-color="#ff7474"/><stop offset=".5" stop-color="#f00000"/><stop offset="1" stop-color="#a00000"/></linearGradient></defs><path d="M3.6 1.6L7.5 5L11.4 1.6L13.4 3.6L10 7.5L13.4 11.4L11.4 13.4L7.5 10L3.6 13.4L1.6 11.4L5 7.5L1.6 3.6Z" fill="url(#rx699_5547_5)" stroke="url(#rx699_5547_5)" stroke-width="1.8" stroke-linejoin="round"/><path d="M3.6 1.6L7.5 5L11.4 1.6L13.4 3.6L10 7.5L13.4 11.4L11.4 13.4L7.5 10L3.6 13.4L1.6 11.4L5 7.5L1.6 3.6Z" fill="none" stroke="#b01010" stroke-width=".5" stroke-linejoin="round" stroke-dasharray="1 .9" transform="translate(7.5 7.5) scale(1.13) translate(-7.5 -7.5)"/></svg>
<div class="t " style="left:12.2px;top:610.29px;font-size:11px;line-height:14px;letter-spacing:-0.049px;color:#000;">Organisation</div>
<div class="inp" style="left:121px;top:607px;width:433px;height:20px"></div>
<div class="t " style="left:12.7px;top:636.79px;font-size:11px;line-height:14px;letter-spacing:-0.239px;color:#000;">Address</div>
<div class="inp" style="left:121px;top:637px;width:433px;height:80px"></div>
<div style="position:absolute;left:536px;top:638px;width:17px;height:78px;background:linear-gradient(90deg,#f5f5f5,#ebebeb 60%);border-left:1px solid #e6e6e6"></div>
<svg style="left:540px;top:643px" width="9.4" height="5.2" viewBox="0 0 10 6"><path d="M0 5.8L5 .3L10 5.8Z" fill="#8d97c8"/></svg>
<svg style="left:540px;top:705.6px" width="9.4" height="5.2" viewBox="0 0 10 6"><path d="M0 .2L5 5.7L10 .2Z" fill="#8d97c8"/></svg>
<div class="t " style="left:562.8px;top:609.79px;font-size:11px;line-height:14px;letter-spacing:-0.207px;color:#000;">Enrolment number</div>
<div class="t " style="left:562.8px;top:639.79px;font-size:11px;line-height:14px;letter-spacing:-0.235px;color:#000;">Branch number</div>
<div class="t " style="left:563.5px;top:669.79px;font-size:11px;line-height:14px;letter-spacing:-0.219px;color:#000;">Telephone</div>
<div class="t " style="left:563.1px;top:699.79px;font-size:11px;line-height:14px;letter-spacing:-0.191px;color:#000;">Completed</div>
<div class="inp" style="left:672px;top:607px;width:321px;height:20px"></div>
<div class="inp" style="left:672px;top:637px;width:321px;height:20px"></div>
<div class="inp" style="left:672px;top:667px;width:321px;height:20px"></div>
<svg style="left:672.5px;top:699.5px" width="14.4" height="14.4" viewBox="0 0 15 15"><defs><linearGradient id="rx672_5699_5" x1="0" y1="0" x2=".35" y2="1"><stop offset="0" stop-color="#ffb4b4"/><stop offset=".42" stop-color="#ff7474"/><stop offset=".5" stop-color="#f00000"/><stop offset="1" stop-color="#a00000"/></linearGradient></defs><path d="M3.6 1.6L7.5 5L11.4 1.6L13.4 3.6L10 7.5L13.4 11.4L11.4 13.4L7.5 10L3.6 13.4L1.6 11.4L5 7.5L1.6 3.6Z" fill="url(#rx672_5699_5)" stroke="url(#rx672_5699_5)" stroke-width="1.8" stroke-linejoin="round"/><path d="M3.6 1.6L7.5 5L11.4 1.6L13.4 3.6L10 7.5L13.4 11.4L11.4 13.4L7.5 10L3.6 13.4L1.6 11.4L5 7.5L1.6 3.6Z" fill="none" stroke="#b01010" stroke-width=".5" stroke-linejoin="round" stroke-dasharray="1 .9" transform="translate(7.5 7.5) scale(1.13) translate(-7.5 -7.5)"/></svg>
<div style="position:absolute;left:742px;top:693px;width:255px;height:28px;background:#e4e4e4;border:1px solid #c2c2c2"></div>
<div class="t " style="left:745.0px;top:699.79px;font-size:11px;line-height:14px;letter-spacing:-0.129px;color:#8c8c8c;">Completed on</div>
<div class="dinp" style="left:854px;top:697px;width:139px;height:20px"></div>
<svg style="left:982.6px;top:705.7px" width="5.8" height="3.4" viewBox="0 0 7 4"><path d="M.3 .2H6.7L3.5 3.9Z" fill="#8a8a8a"/></svg>
<div class="t " style="left:11.8px;top:762.19px;font-size:11px;line-height:14px;letter-spacing:-0.307px;color:#000;">Engineer</div>
<div class="inp" style="left:121px;top:759px;width:764px;height:20px"></div>
<div class="t " style="left:124.0px;top:762.19px;font-size:11px;line-height:14px;letter-spacing:-0.328px;color:#000;">New Engineer</div>
<div class="t " style="left:893.7px;top:762.19px;font-size:11px;line-height:14px;letter-spacing:-0.243px;color:#000;">Does all</div>
<svg style="left:937.5px;top:761.5px" width="14.4" height="14.4" viewBox="0 0 15 15"><defs><linearGradient id="rx937_5761_5" x1="0" y1="0" x2=".35" y2="1"><stop offset="0" stop-color="#ffb4b4"/><stop offset=".42" stop-color="#ff7474"/><stop offset=".5" stop-color="#f00000"/><stop offset="1" stop-color="#a00000"/></linearGradient></defs><path d="M3.6 1.6L7.5 5L11.4 1.6L13.4 3.6L10 7.5L13.4 11.4L11.4 13.4L7.5 10L3.6 13.4L1.6 11.4L5 7.5L1.6 3.6Z" fill="url(#rx937_5761_5)" stroke="url(#rx937_5761_5)" stroke-width="1.8" stroke-linejoin="round"/><path d="M3.6 1.6L7.5 5L11.4 1.6L13.4 3.6L10 7.5L13.4 11.4L11.4 13.4L7.5 10L3.6 13.4L1.6 11.4L5 7.5L1.6 3.6Z" fill="none" stroke="#b01010" stroke-width=".5" stroke-linejoin="round" stroke-dasharray="1 .9" transform="translate(7.5 7.5) scale(1.13) translate(-7.5 -7.5)"/></svg>
<div class="t " style="left:12.2px;top:792.19px;font-size:11px;line-height:14px;letter-spacing:0.079px;color:#000;">On behalf of</div>
<div class="inp" style="left:121px;top:789px;width:872px;height:20px"></div>
<div class="t " style="left:11.8px;top:822.19px;font-size:11px;line-height:14px;letter-spacing:0.319px;color:#000;">Date</div>
<div class="inp" style="left:121px;top:819px;width:211px;height:20px"></div>
<svg style="left:321.6px;top:827.7px" width="5.8" height="3.4" viewBox="0 0 7 4"><path d="M.3 .2H6.7L3.5 3.9Z" fill="#222"/></svg>
<div class="t " style="left:340.5px;top:822.19px;font-size:11px;line-height:14px;letter-spacing:0.094px;color:#000;">Inspection result</div>
<div class="inp" style="left:450px;top:819px;width:72px;height:20px"></div>
<div style="position:absolute;left:1px;top:864px;width:1007px;height:8px;background:linear-gradient(#3c3f46 0,#454852 2px,#42454e)"></div>
<div style="position:absolute;left:1px;top:872px;width:1007px;height:16px;background:#353535"></div>
<svg style="left:993px;top:873px" width="12" height="12" viewBox="0 0 12 12" shape-rendering="crispEdges"><rect x="8" y="0" width="2" height="2" fill="#777"/><rect x="9" y="1" width="2" height="2" fill="#fff"/><rect x="4" y="4" width="2" height="2" fill="#777"/><rect x="5" y="5" width="2" height="2" fill="#fff"/><rect x="8" y="4" width="2" height="2" fill="#777"/><rect x="9" y="5" width="2" height="2" fill="#fff"/><rect x="0" y="8" width="2" height="2" fill="#777"/><rect x="1" y="9" width="2" height="2" fill="#fff"/><rect x="4" y="8" width="2" height="2" fill="#777"/><rect x="5" y="9" width="2" height="2" fill="#fff"/><rect x="8" y="8" width="2" height="2" fill="#777"/><rect x="9" y="9" width="2" height="2" fill="#fff"/></svg>
</body></html>
